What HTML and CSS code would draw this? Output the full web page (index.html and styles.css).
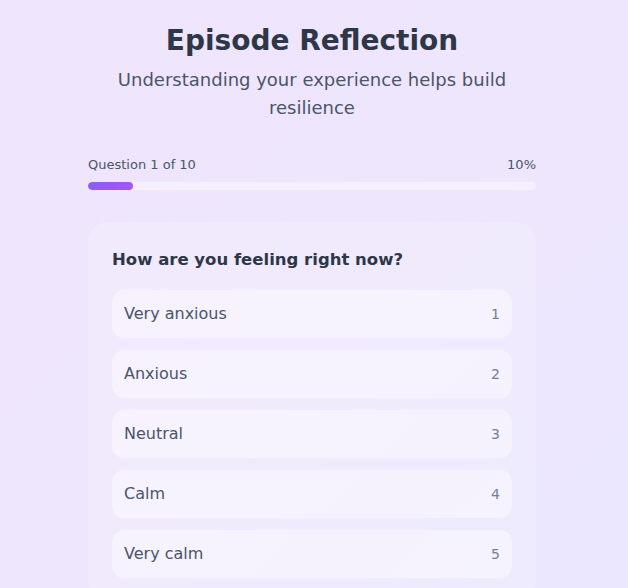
FILE: index.html
```html
<!DOCTYPE html>
<html lang="en">
<head>
  <meta charset="UTF-8" />
  <meta name="viewport" content="width=device-width, initial-scale=1.0"/>
  <title>Episode Reflection</title>
  <link rel="stylesheet" href="styles.css">
</head>
<body>
  <div class="container">
    <div class="header">
      <h1>Episode Reflection</h1>
      <p>Understanding your experience helps build resilience</p>
    </div>

    <div class="progress">
      <div class="progress-info">
        <span>Question 1 of 10</span>
        <span>10%</span>
      </div>
      <div class="progress-track">
        <div class="progress-fill" style="width: 10%"></div>
      </div>
    </div>

    <div class="card">
      <h2>How are you feeling right now?</h2>

      <div class="options">
        <button class="option"><span>Very anxious</span><span class="num">1</span></button>
        <button class="option"><span>Anxious</span><span class="num">2</span></button>
        <button class="option"><span>Neutral</span><span class="num">3</span></button>
        <button class="option"><span>Calm</span><span class="num">4</span></button>
        <button class="option"><span>Very calm</span><span class="num">5</span></button>
      </div>
    </div>
  </div>
</body>
</html>
```

FILE: styles.css
```css
body {
  margin: 0;
  padding-right: 4px;
  min-height: 100vh;
  font-family: 'DejaVu Sans', sans-serif;
  background: linear-gradient(135deg, #efe5fc, #eee6fd 50%, #eae7fe);
  color: #2d3748;
}

.container {
  max-width: 448px;
  margin: 0 auto;
  padding-top: 23px;
}

.header {
  text-align: center;
  margin-bottom: 33px;
}

.header h1 {
  margin: 0;
  font-size: 28px;
  line-height: 36px;
  font-weight: bold;
  color: #2d3748;
}

.header p {
  margin: 7px 0 0;
  font-size: 18px;
  line-height: 28px;
  color: #4a5568;
}

.progress {
  margin-bottom: 32px;
}

.progress-info {
  display: flex;
  justify-content: space-between;
  font-size: 13px;
  line-height: 20px;
  color: #4a5568;
  margin-bottom: 7px;
}

.progress-track {
  height: 8px;
  border-radius: 4px;
  background: rgba(255, 255, 255, 0.4);
  overflow: hidden;
}

.progress-fill {
  height: 100%;
  border-radius: 4px;
  background: linear-gradient(90deg, #8b5cf6, #a855f7);
}

.card {
  background: rgba(255, 255, 255, 0.18);
  border-radius: 20px;
  padding: 25px 24px 24px;
}

.card h2 {
  margin: 0 0 17px;
  font-size: 16.5px;
  line-height: 26px;
  font-weight: bold;
  color: #2d3748;
}

.options {
  display: flex;
  flex-direction: column;
  gap: 12px;
}

.option {
  display: flex;
  justify-content: space-between;
  align-items: center;
  width: 100%;
  padding: 12px;
  border: none;
  border-radius: 12px;
  background: rgba(255, 255, 255, 0.4);
  font-family: inherit;
  font-size: 16px;
  line-height: 24px;
  color: #4a5568;
  text-align: left;
  cursor: pointer;
}

.option .num {
  font-size: 14px;
  color: #718096;
}
```
